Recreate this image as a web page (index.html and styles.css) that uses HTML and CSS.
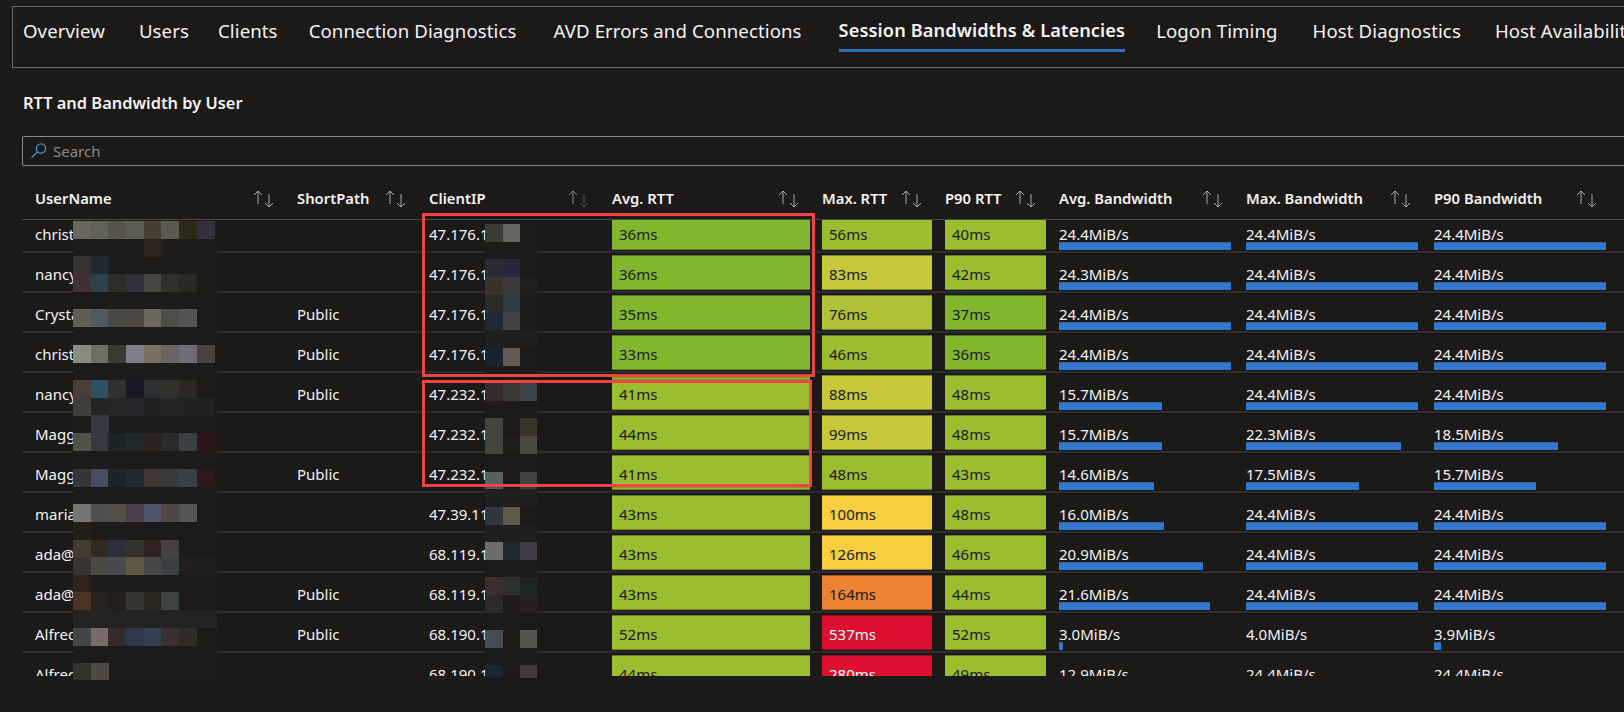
FILE: index.html
```html
<!DOCTYPE html>
<html lang="en">
<head>
  <meta charset="UTF-8" />
  <title>Session Bandwidths &amp; Latencies</title>
  <link rel="stylesheet" href="styles.css">
</head>
<body>

  <nav class="tabs">
    <a class="tab">Overview</a>
    <a class="tab">Users</a>
    <a class="tab">Clients</a>
    <a class="tab">Connection Diagnostics</a>
    <a class="tab">AVD Errors and Connections</a>
    <a class="tab active">Session Bandwidths &amp; Latencies</a>
    <a class="tab">Logon Timing</a>
    <a class="tab">Host Diagnostics</a>
    <a class="tab">Host Availability</a>
  </nav>

  <h2 class="title">RTT and Bandwidth by User</h2>

  <div class="search">
    <svg class="search-icon" width="18" height="18" viewBox="0 0 18 18"><circle cx="11" cy="6.5" r="4.6"/><path d="M7.6 9.8 1.5 15.8"/></svg>
    <span>Search</span>
  </div>

  <div class="grid head">
    <div class="th">UserName<svg class="sort" width="22" height="18" viewBox="0 0 22 18"><path d="M5 14V1M1 5l4-4 4 4M16 17V4M12 13l4 4 4-4"/></svg></div>
    <div class="th">ShortPath<svg class="sort" width="22" height="18" viewBox="0 0 22 18"><path d="M5 14V1M1 5l4-4 4 4M16 17V4M12 13l4 4 4-4"/></svg></div>
    <div class="th">ClientIP<svg class="sort dim" width="22" height="18" viewBox="0 0 22 18"><path d="M5 14V1M1 5l4-4 4 4"/><path class="dimmer" d="M16 17V4M12 13l4 4 4-4"/></svg></div>
    <div class="th">Avg. RTT<svg class="sort" width="22" height="18" viewBox="0 0 22 18"><path d="M5 14V1M1 5l4-4 4 4M16 17V4M12 13l4 4 4-4"/></svg></div>
    <div class="th">Max. RTT<svg class="sort" width="22" height="18" viewBox="0 0 22 18"><path d="M5 14V1M1 5l4-4 4 4M16 17V4M12 13l4 4 4-4"/></svg></div>
    <div class="th">P90 RTT<svg class="sort" width="22" height="18" viewBox="0 0 22 18"><path d="M5 14V1M1 5l4-4 4 4M16 17V4M12 13l4 4 4-4"/></svg></div>
    <div class="th">Avg. Bandwidth<svg class="sort" width="22" height="18" viewBox="0 0 22 18"><path d="M5 14V1M1 5l4-4 4 4M16 17V4M12 13l4 4 4-4"/></svg></div>
    <div class="th">Max. Bandwidth<svg class="sort" width="22" height="18" viewBox="0 0 22 18"><path d="M5 14V1M1 5l4-4 4 4M16 17V4M12 13l4 4 4-4"/></svg></div>
    <div class="th">P90 Bandwidth<svg class="sort" width="22" height="18" viewBox="0 0 22 18"><path d="M5 14V1M1 5l4-4 4 4M16 17V4M12 13l4 4 4-4"/></svg></div>
  </div>

  <div class="rows">
    <div class="grid row">
      <div class="td">christ</div><div class="td"></div><div class="td">47.176.1</div>
      <div class="rtt g1">36ms</div><div class="rtt g2">56ms</div><div class="rtt g2">40ms</div>
      <div class="bw">24.4MiB/s<i style="width:172px"></i></div><div class="bw">24.4MiB/s<i style="width:172px"></i></div><div class="bw">24.4MiB/s<i style="width:172px"></i></div>
    </div>
    <div class="grid row">
      <div class="td">nancy</div><div class="td"></div><div class="td">47.176.1</div>
      <div class="rtt g1">36ms</div><div class="rtt y1">83ms</div><div class="rtt g2">42ms</div>
      <div class="bw">24.3MiB/s<i style="width:172px"></i></div><div class="bw">24.4MiB/s<i style="width:172px"></i></div><div class="bw">24.4MiB/s<i style="width:172px"></i></div>
    </div>
    <div class="grid row">
      <div class="td">Crystal</div><div class="td">Public</div><div class="td">47.176.1</div>
      <div class="rtt g1">35ms</div><div class="rtt g3">76ms</div><div class="rtt g1">37ms</div>
      <div class="bw">24.4MiB/s<i style="width:172px"></i></div><div class="bw">24.4MiB/s<i style="width:172px"></i></div><div class="bw">24.4MiB/s<i style="width:172px"></i></div>
    </div>
    <div class="grid row">
      <div class="td">christ</div><div class="td">Public</div><div class="td">47.176.1</div>
      <div class="rtt g1">33ms</div><div class="rtt g2">46ms</div><div class="rtt g1">36ms</div>
      <div class="bw">24.4MiB/s<i style="width:172px"></i></div><div class="bw">24.4MiB/s<i style="width:172px"></i></div><div class="bw">24.4MiB/s<i style="width:172px"></i></div>
    </div>
    <div class="grid row">
      <div class="td">nancy</div><div class="td">Public</div><div class="td">47.232.1</div>
      <div class="rtt g2">41ms</div><div class="rtt y1">88ms</div><div class="rtt g2">48ms</div>
      <div class="bw">15.7MiB/s<i style="width:103px"></i></div><div class="bw">24.4MiB/s<i style="width:172px"></i></div><div class="bw">24.4MiB/s<i style="width:172px"></i></div>
    </div>
    <div class="grid row">
      <div class="td">Maggie</div><div class="td"></div><div class="td">47.232.1</div>
      <div class="rtt g2">44ms</div><div class="rtt y1">99ms</div><div class="rtt g2">48ms</div>
      <div class="bw">15.7MiB/s<i style="width:103px"></i></div><div class="bw">22.3MiB/s<i style="width:155px"></i></div><div class="bw">18.5MiB/s<i style="width:124px"></i></div>
    </div>
    <div class="grid row">
      <div class="td">Maggie</div><div class="td">Public</div><div class="td">47.232.1</div>
      <div class="rtt g2">41ms</div><div class="rtt g2">48ms</div><div class="rtt g2">43ms</div>
      <div class="bw">14.6MiB/s<i style="width:95px"></i></div><div class="bw">17.5MiB/s<i style="width:113px"></i></div><div class="bw">15.7MiB/s<i style="width:102px"></i></div>
    </div>
    <div class="grid row">
      <div class="td">maria</div><div class="td"></div><div class="td">47.39.11</div>
      <div class="rtt g2">43ms</div><div class="rtt y2">100ms</div><div class="rtt g2">48ms</div>
      <div class="bw">16.0MiB/s<i style="width:105px"></i></div><div class="bw">24.4MiB/s<i style="width:172px"></i></div><div class="bw">24.4MiB/s<i style="width:172px"></i></div>
    </div>
    <div class="grid row">
      <div class="td">ada@</div><div class="td"></div><div class="td">68.119.1</div>
      <div class="rtt g2">43ms</div><div class="rtt y2">126ms</div><div class="rtt g2">46ms</div>
      <div class="bw">20.9MiB/s<i style="width:144px"></i></div><div class="bw">24.4MiB/s<i style="width:172px"></i></div><div class="bw">24.4MiB/s<i style="width:172px"></i></div>
    </div>
    <div class="grid row">
      <div class="td">ada@</div><div class="td">Public</div><div class="td">68.119.1</div>
      <div class="rtt g2">43ms</div><div class="rtt o1">164ms</div><div class="rtt g2">44ms</div>
      <div class="bw">21.6MiB/s<i style="width:151px"></i></div><div class="bw">24.4MiB/s<i style="width:172px"></i></div><div class="bw">24.4MiB/s<i style="width:172px"></i></div>
    </div>
    <div class="grid row">
      <div class="td">Alfred</div><div class="td">Public</div><div class="td">68.190.1</div>
      <div class="rtt g2">52ms</div><div class="rtt r1">537ms</div><div class="rtt g2">52ms</div>
      <div class="bw">3.0MiB/s<i style="width:4px"></i></div><div class="bw">4.0MiB/s<i style="width:0"></i></div><div class="bw">3.9MiB/s<i style="width:7px"></i></div>
    </div>
    <div class="grid row">
      <div class="td">Alfred</div><div class="td"></div><div class="td">68.190.1</div>
      <div class="rtt g2">44ms</div><div class="rtt r1">280ms</div><div class="rtt g2">49ms</div>
      <div class="bw">12.9MiB/s<i style="width:80px"></i></div><div class="bw">24.4MiB/s<i style="width:172px"></i></div><div class="bw">24.4MiB/s<i style="width:172px"></i></div>
    </div>
  </div>

  <!-- pixelated names -->
  <svg class="mosaic mosaic-user" width="144" height="459" viewBox="0 0 144 459" shape-rendering="crispEdges">
    <rect width="144" height="459" fill="#1c1b1a"/>
    <g transform="translate(0,0)"><rect x="0" width="18" height="18" fill="#69675f"/><rect x="18" width="18" height="18" fill="#62615a"/><rect x="35" width="18" height="18" fill="#57554a"/><rect x="53" width="18" height="18" fill="#5c5d55"/><rect x="71" width="18" height="18" fill="#463f32"/><rect x="88" width="18" height="18" fill="#5a5a4f"/><rect x="106" width="18" height="18" fill="#2e2819"/><rect x="124" width="18" height="18" fill="#33303a"/></g>
    <g transform="translate(0,18)"><rect x="71" width="18" height="18" fill="#2c241b"/></g>
    <g transform="translate(0,35)"><rect x="0" width="18" height="18" fill="#353433"/><rect x="18" width="18" height="18" fill="#1f2a30"/></g>
    <g transform="translate(0,53)"><rect x="0" width="18" height="18" fill="#3f3138"/><rect x="18" width="18" height="18" fill="#2d4248"/><rect x="35" width="18" height="18" fill="#2e2e28"/><rect x="53" width="18" height="18" fill="#33303a"/><rect x="71" width="18" height="18" fill="#474741"/><rect x="88" width="18" height="18" fill="#2f2f2c"/><rect x="106" width="18" height="18" fill="#2a2a22"/></g>
    <g transform="translate(0,88)"><rect x="0" width="18" height="18" fill="#605e59"/><rect x="18" width="18" height="18" fill="#515a5c"/><rect x="35" width="18" height="18" fill="#494a45"/><rect x="53" width="18" height="18" fill="#4c4944"/><rect x="71" width="18" height="18" fill="#6a695c"/><rect x="88" width="18" height="18" fill="#4d4d4a"/><rect x="106" width="18" height="18" fill="#545452"/></g>
    <g transform="translate(0,124)"><rect x="0" width="18" height="18" fill="#8a8c84"/><rect x="18" width="18" height="18" fill="#6f6f63"/><rect x="35" width="18" height="18" fill="#373b33"/><rect x="53" width="18" height="18" fill="#7f7d8a"/><rect x="71" width="18" height="18" fill="#79725f"/><rect x="88" width="18" height="18" fill="#686662"/><rect x="106" width="18" height="18" fill="#6f6c73"/><rect x="124" width="18" height="18" fill="#464340"/></g>
    <g transform="translate(0,159)"><rect x="0" width="18" height="18" fill="#4a3d3c"/><rect x="18" width="18" height="18" fill="#2f5160"/><rect x="35" width="18" height="18" fill="#30302e"/><rect x="53" width="18" height="18" fill="#191826"/><rect x="71" width="18" height="18" fill="#2b3035"/><rect x="88" width="18" height="18" fill="#30302d"/><rect x="106" width="18" height="18" fill="#2b2922"/></g>
    <g transform="translate(0,177)"><rect x="0" width="18" height="18" fill="#3d3f38"/><rect x="18" width="18" height="18" fill="#232424"/><rect x="35" width="18" height="18" fill="#252523"/><rect x="53" width="18" height="18" fill="#25252a"/><rect x="71" width="18" height="18" fill="#222220"/><rect x="88" width="18" height="18" fill="#242321"/><rect x="106" width="18" height="18" fill="#222220"/><rect x="124" width="18" height="18" fill="#212223"/></g>
    <g transform="translate(0,194)"><rect x="18" width="18" height="18" fill="#343642"/></g>
    <g transform="translate(0,212)"><rect x="0" width="18" height="18" fill="#52524a"/><rect x="18" width="18" height="18" fill="#373844"/><rect x="35" width="18" height="18" fill="#1d2426"/><rect x="53" width="18" height="18" fill="#20292a"/><rect x="71" width="18" height="18" fill="#2c2021"/><rect x="88" width="18" height="18" fill="#2a2b2a"/><rect x="106" width="18" height="18" fill="#3a3f43"/><rect x="124" width="18" height="18" fill="#2a1819"/></g>
    <g transform="translate(0,248)"><rect x="0" width="18" height="18" fill="#343734"/><rect x="18" width="18" height="18" fill="#4a4a60"/><rect x="35" width="18" height="18" fill="#1c2426"/><rect x="53" width="18" height="18" fill="#202a2c"/><rect x="71" width="18" height="18" fill="#423534"/><rect x="88" width="18" height="18" fill="#3a3b38"/><rect x="106" width="18" height="18" fill="#3a4044"/><rect x="124" width="18" height="18" fill="#2d1a1a"/></g>
    <g transform="translate(0,283)"><rect x="0" width="18" height="18" fill="#747572"/><rect x="18" width="18" height="18" fill="#4f4e52"/><rect x="35" width="18" height="18" fill="#544f4d"/><rect x="53" width="18" height="18" fill="#4a3f47"/><rect x="71" width="18" height="18" fill="#51536a"/><rect x="88" width="18" height="18" fill="#4c4848"/><rect x="106" width="18" height="18" fill="#555459"/></g>
    <g transform="translate(0,301)"><rect x="0" width="18" height="18" fill="#221f18"/></g>
    <g transform="translate(0,319)"><rect x="0" width="18" height="18" fill="#443a30"/><rect x="18" width="18" height="18" fill="#32291f"/><rect x="35" width="18" height="18" fill="#2a303a"/><rect x="53" width="18" height="18" fill="#34322c"/><rect x="71" width="18" height="18" fill="#321f20"/><rect x="88" width="18" height="18" fill="#434240"/></g>
    <g transform="translate(0,336)"><rect x="0" width="18" height="18" fill="#3a3430"/><rect x="18" width="18" height="18" fill="#4a4a45"/><rect x="35" width="18" height="18" fill="#474a4e"/><rect x="53" width="18" height="18" fill="#5e5844"/><rect x="71" width="18" height="18" fill="#494745"/><rect x="88" width="18" height="18" fill="#3a4144"/><rect x="106" width="18" height="18" fill="#21201e"/><rect x="124" width="18" height="18" fill="#201f1e"/></g>
    <g transform="translate(0,354)"><rect x="0" width="18" height="18" fill="#2f2317"/></g>
    <g transform="translate(0,371)"><rect x="0" width="18" height="18" fill="#4a3425"/><rect x="18" width="18" height="18" fill="#24231c"/><rect x="35" width="18" height="18" fill="#241e1c"/><rect x="53" width="18" height="18" fill="#373731"/><rect x="71" width="18" height="18" fill="#2a261e"/><rect x="88" width="18" height="18" fill="#3b4345"/></g>
    <g transform="translate(0,389)"><rect x="0" width="144" height="18" fill="#222322"/></g>
    <g transform="translate(0,407)"><rect x="0" width="18" height="18" fill="#434646"/><rect x="18" width="18" height="18" fill="#7a6a68"/><rect x="35" width="18" height="18" fill="#352b2d"/><rect x="53" width="18" height="18" fill="#2e3a4c"/><rect x="71" width="18" height="18" fill="#32414f"/><rect x="88" width="18" height="18" fill="#3a2f33"/><rect x="106" width="18" height="18" fill="#2d2d26"/></g>
    <g transform="translate(0,442)"><rect x="0" width="18" height="17" fill="#323230"/><rect x="18" width="18" height="17" fill="#4f4741"/></g>
  </svg>

  <!-- pixelated addresses -->
  <svg class="mosaic mosaic-ip" width="52" height="454" viewBox="0 0 52 454" shape-rendering="crispEdges">
    <rect width="52" height="454" fill="#1c1b1a"/>
    <g transform="translate(0,0)"><rect x="0" width="18" height="18" fill="#3b3c36"/><rect x="18" width="17" height="18" fill="#666560"/></g>
    <g transform="translate(0,35)"><rect x="0" width="18" height="18" fill="#2a2a36"/><rect x="18" width="17" height="18" fill="#27263a"/></g>
    <g transform="translate(0,53)"><rect x="0" width="18" height="18" fill="#37322a"/><rect x="18" width="17" height="18" fill="#3a3a3a"/><rect x="35" width="17" height="18" fill="#1f2021"/></g>
    <g transform="translate(0,71)"><rect x="0" width="18" height="18" fill="#2c2a28"/><rect x="18" width="17" height="18" fill="#2e3a3f"/></g>
    <g transform="translate(0,88)"><rect x="0" width="18" height="18" fill="#1f2a35"/><rect x="18" width="17" height="18" fill="#414044"/></g>
    <g transform="translate(0,106)"><rect width="52" height="18" fill="#201f20"/></g>
    <g transform="translate(0,124)"><rect x="0" width="18" height="18" fill="#1b2330"/><rect x="18" width="17" height="18" fill="#625a53"/></g>
    <g transform="translate(0,159)"><rect x="0" width="18" height="18" fill="#362a2a"/><rect x="18" width="17" height="18" fill="#383732"/><rect x="35" width="17" height="18" fill="#3d4248"/></g>
    <g transform="translate(0,194)"><rect x="0" width="18" height="18" fill="#45443c"/><rect x="35" width="17" height="18" fill="#3a332a"/></g>
    <g transform="translate(0,212)"><rect x="0" width="18" height="18" fill="#45453f"/><rect x="18" width="17" height="18" fill="#1e1e1d"/><rect x="35" width="17" height="18" fill="#4a4941"/></g>
    <g transform="translate(0,248)"><rect x="0" width="18" height="18" fill="#5a605f"/><rect x="35" width="17" height="18" fill="#404341"/></g>
    <g transform="translate(0,265)"><rect width="52" height="18" fill="#1f1f20"/></g>
    <g transform="translate(0,283)"><rect x="0" width="18" height="18" fill="#33353f"/><rect x="18" width="17" height="18" fill="#5f5a4c"/></g>
    <g transform="translate(0,301)"><rect width="52" height="18" fill="#1f1f20"/></g>
    <g transform="translate(0,318)"><rect x="0" width="18" height="18" fill="#6d6b6b"/><rect x="18" width="17" height="18" fill="#1e2a30"/><rect x="35" width="17" height="18" fill="#423c44"/></g>
    <g transform="translate(0,353)"><rect x="0" width="18" height="18" fill="#3c2e2e"/><rect x="18" width="17" height="18" fill="#2f302e"/><rect x="35" width="17" height="18" fill="#1f2427"/></g>
    <g transform="translate(0,371)"><rect x="0" width="18" height="18" fill="#2a2c2a"/><rect x="35" width="17" height="18" fill="#261f24"/></g>
    <g transform="translate(0,406)"><rect x="0" width="18" height="18" fill="#464c4f"/><rect x="35" width="17" height="18" fill="#53554f"/></g>
    <g transform="translate(0,441)"><rect x="0" width="18" height="13" fill="#1d2530"/><rect x="35" width="17" height="13" fill="#3f3b3c"/></g>
  </svg>

  <div class="mark mark-one"></div>
  <div class="mark mark-two"></div>

</body>
</html>
```

FILE: styles.css
```css
html, body {
  margin: 0;
  height: 712px;
  overflow: hidden;
}

body {
  position: relative;
  background: #1b1a19;
  color: #f3f2f1;
  font-family: "Noto Sans", "Open Sans", sans-serif;
  font-size: 15px;
}

/* tabs */
.tabs {
  display: flex;
  margin: 6px 0 0 12px;
  padding: 0 0 0 10px;
  height: 60px;
  border: 1px solid #6c6b6a;
  border-right: none;
  white-space: nowrap;
  overflow: hidden;
  font-size: 18.6px;
  letter-spacing: .1px;
}

.tab {
  flex: none;
  height: 42px;
  line-height: 47px;
}

.tab:nth-child(2) { margin-left: 34px; }
.tab:nth-child(3) { margin-left: 29px; }
.tab:nth-child(4) { margin-left: 31px; }
.tab:nth-child(5) { margin-left: 37px; }
.tab:nth-child(6) { margin-left: 37px; }
.tab:nth-child(7) { margin-left: 31px; }
.tab:nth-child(8) { margin-left: 35px; }
.tab:nth-child(9) { margin-left: 34px; }

.tab.active {
  font-size: 18.2px;
  font-weight: 600;
  border-bottom: 3px solid #2f6fbf;
}

.title {
  margin: 23px 0 0 23px;
  font-size: 16.4px;
  line-height: 24px;
  font-weight: 600;
}

/* search */
.search {
  display: flex;
  align-items: center;
  gap: 5px;
  margin: 21px 0 0 22px;
  height: 28px;
  padding-left: 7px;
  border: 1px solid #8a8886;
  border-right: none;
  border-radius: 2px 0 0 2px;
  color: #8a8886;
  font-size: 15px;
}

.search-icon {
  fill: none;
  stroke: #4a90d9;
  stroke-width: 1.3;
  flex: none;
}

/* table */
.grid {
  display: grid;
  grid-template-columns: 262px 132px 183px 210px 123px 114px 187px 188px 1fr;
  margin-left: 22px;
}

.head {
  height: 53px;
  border-bottom: 1px solid #4a4948;
}

.th {
  display: flex;
  align-items: center;
  justify-content: space-between;
  padding: 11px 9px 0 13px;
  font-size: 14.8px;
  font-weight: 600;
}

.th:last-child {
  padding-right: 26px;
}

.sort {
  flex: none;
  margin-top: 2px;
  fill: none;
  stroke: #a8a7a6;
  stroke-width: 1;
}

.sort.dim {
  stroke: #8a8988;
}

.sort .dimmer {
  stroke: #4f4e4d;
}

.rows {
  height: 456px;
  overflow: hidden;
}

.row {
  box-sizing: border-box;
  height: 40px;
  border-bottom: 2px solid #2e2d2c;
}

.row:first-child {
  margin-top: -7px;
}

.td {
  display: flex;
  align-items: center;
  padding: 4px 0 0 13px;
  white-space: nowrap;
}

.rtt {
  display: flex;
  align-items: center;
  margin: 2px 0 1px 13px;
  padding: 2px 0 0 7px;
  border-top: 1px solid rgba(0, 0, 0, .35);
  border-bottom: 1px solid rgba(0, 0, 0, .3);
  color: #1b1a19;
}

.rtt:nth-child(4) {
  margin-right: -1px;
}

.g1 { background: #82b72d; }
.g2 { background: #9bbd30; }
.g3 { background: #afc136; }
.y1 { background: #c7c73a; }
.y2 { background: #f6ce3e; }
.o1 { background: #ec8232; }
.r1 { background: #dc102e; color: #fff; }

.bw {
  display: flex;
  flex-direction: column;
  justify-content: flex-end;
  padding: 0 0 1px 13px;
  line-height: 16px;
}

.bw i {
  display: block;
  height: 7px;
  background: #3277cf;
  border-top: 1px solid #3a6095;
}

/* things on top of the table */
.mosaic {
  position: absolute;
}

.mosaic-user {
  left: 73px;
  top: 221px;
}

.mosaic-ip {
  left: 485px;
  top: 224px;
}

.mark {
  position: absolute;
  box-sizing: border-box;
  border: 3px solid #f04444;
  box-shadow: 0 0 2px rgba(0, 0, 0, .5);
}

.mark-one {
  left: 422px;
  top: 213px;
  width: 393px;
  height: 164px;
}

.mark-two {
  left: 422px;
  top: 380px;
  width: 390px;
  height: 107px;
}
```
